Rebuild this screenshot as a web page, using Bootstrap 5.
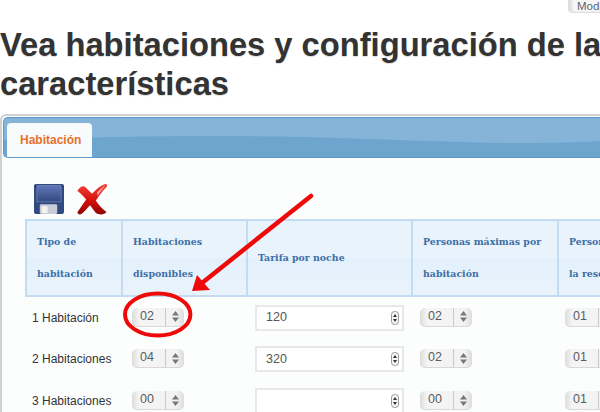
<!DOCTYPE html>
<html lang="es">
<head>
<meta charset="utf-8">
<title>Habitaciones</title>
<link href="https://cdn.jsdelivr.net/npm/bootstrap@5.3.0/dist/css/bootstrap.min.css" rel="stylesheet">
<style>
html,body{width:600px;height:412px;overflow:hidden;background:#fff}
body{font-family:"Liberation Sans",Arial,sans-serif;color:#333;position:relative}
.pagewrap{width:900px}
.topbtn{display:block;margin-left:568px;margin-top:-9px;width:120px;height:22px;padding:8px 0 0 8px;font-size:11.5px;line-height:13px;color:#5a6472;background:linear-gradient(#f2f2f2,#fafafa);border:1px solid #ddd;border-radius:4px;box-shadow:inset 3px 0 3px #ddd}
.ttl{font-family:"Liberation Sans",Arial,sans-serif;font-weight:700;font-size:32.7px;line-height:39px;color:#333;margin:12px 0 0 0;white-space:nowrap;text-shadow:0 1px 1px #ddd}
.frame{margin-top:11px;border:2px solid #d0d0d0;border-right:0;border-bottom:0;border-radius:6px 0 0 0;padding:1px 0 0 1px;background:#fcfefe;height:320px}
.tabbar{position:relative;height:41px;background:#86b4d8;border:1px solid #5c9bcf;border-right:0;border-radius:5px 0 0 5px;overflow:hidden}
.wave{position:absolute;left:0;top:0;width:900px;height:40px}
.tabitem{position:absolute;left:3px;top:5px;width:85px;height:35px;background:#f7fbfc;border-radius:4px 4px 0 0;font-size:12px;font-weight:700;color:#e8702a;padding:10px 0 0 13px;line-height:14px}
.tools{padding:26px 0 0 31px;gap:12px;height:61px}
.roomtable{table-layout:fixed;width:761px;margin-left:22px;border-collapse:collapse}
.roomtable th{height:76px;padding:0 0 0 10px;background:linear-gradient(#e8f3fc 50%,#e3f0fb 50%,#e9f3fc);border:2px solid #c4dcf1;font-family:"DejaVu Serif",serif;font-size:9.4px;font-weight:700;line-height:32px;color:#3d6ea6;vertical-align:middle}
.roomtable td{height:42px;padding:0;border:0;background:transparent;vertical-align:middle;font-size:12px;color:#333}
.roomtable td.c1{padding-left:6px;white-space:nowrap}
.roomtable td.c2{padding-left:10px}
.roomtable td.c3{padding-left:8px}
.roomtable td.c4{padding-left:8px}
.roomtable td.c5{padding-left:7px}
.w1{width:96px}.w2{width:125px}.w3{width:165px}.w4{width:146px}.w5{width:229px}
.pick{display:flex;width:52px;height:19px;margin-top:-1px;background:linear-gradient(90deg,#dcdcdc,#f5f5f5 14%,#f2f2f2 86%,#dcdcdc);border-bottom:1px solid #d8d8d8;border-radius:5px;font-size:12.5px;line-height:17px;color:#5c5c5c}
.pickval{width:34px;padding-left:8px;border-right:1px solid #c9c9c9}
.pickarr{flex:1;display:flex;align-items:center;justify-content:center}
.numbox{display:flex;align-items:center;justify-content:space-between;width:149px;height:26px;border:2px solid #e8e8e8;background:#fff;padding:0 3px 0 9px;font-size:12.5px;color:#555}
.overlay{position:absolute;left:0;top:0;width:600px;height:412px;pointer-events:none}
</style>
</head>
<body>
<div class="pagewrap">
  <span class="topbtn">Modificar</span>
  <h1 class="ttl">Vea habitaciones y configuración de la<br>características</h1>
  <div class="frame">
    <div class="tabbar">
      <svg class="wave" viewBox="0 0 900 40" preserveAspectRatio="none"><path d="M0 22C120 18 220 17 300 19S450 25 520 25 590 22 640 22 800 24 900 24V40H0Z" fill="#6ea5cf"/></svg>
      <div class="tabitem">Habitación</div>
    </div>
    <div class="tools d-flex align-items-start">
      <svg width="30" height="30" viewBox="0 0 31 31"><defs><linearGradient id="fl" x1="0" y1="0" x2="0" y2="1"><stop offset="0" stop-color="#5f78b8"/><stop offset="1" stop-color="#33497f"/></linearGradient></defs><path d="M2 0H29Q31 0 31 2V29Q31 31 29 31H2Q0 31 0 29V2Q0 0 2 0Z" fill="#2f4a80"/><rect x="3" y="1.500" width="25" height="17" fill="url(#fl)" stroke="#8293c0" stroke-width=".6"/><rect x="6" y="21" width="18" height="10" rx="1.500" fill="#c9ccd6"/><rect x="8" y="23" width="6" height="7" fill="#f3f3f3"/><circle cx="1.700" cy="2" r=".8" fill="#1f2e52"/><circle cx="29" cy="2" r=".8" fill="#1f2e52"/></svg>
      <svg width="32" height="31" viewBox="0 0 32 32"><defs><linearGradient id="xr" x1="0" y1="0" x2="0" y2="1"><stop offset="0" stop-color="#f04038"/><stop offset=".55" stop-color="#d40f0a"/><stop offset="1" stop-color="#8e0503"/></linearGradient></defs><path d="M1 7C3 3 7 1 9 3L16 10C20 6 25 1 30 0 32 0 32 2 31 3 27 7 23 12 20 17 23 22 27 26 31 29 29 32 23 32 20 30 18 27 16 25 14 22 11 25 8 29 5 31 3 32 1 31 1 29 4 25 7 20 10 16 7 12 4 10 1 7Z" fill="url(#xr)"/><path d="M21 9C24 6 27 3 30 1.500 27 5 24 9 22 12Z" fill="#f8a09a"/></svg>
    </div>
    <table class="roomtable">
      <colgroup><col class="w1"><col class="w2"><col class="w3"><col class="w4"><col class="w5"></colgroup>
      <thead><tr>
        <th>Tipo de<br>habitación</th>
        <th>Habitaciones<br>disponibles</th>
        <th>Tarifa por noche</th>
        <th>Personas máximas por<br>habitación</th>
        <th>Personas máximas en<br>la reserva</th>
      </tr></thead>
      <tbody>
        <tr>
          <td class="c1">1 Habitación</td>
          <td class="c2"><div class="pick"><span class="pickval">02</span><span class="pickarr"><svg width="7" height="11" viewBox="0 0 7 11"><path d="M3.500 0 7 4.500H0ZM3.500 11 0 6.500H7Z" fill="#777"/></svg></span></div></td>
          <td class="c3"><div class="numbox"><span>120</span><svg width="8" height="14" viewBox="0 0 8 14"><rect x=".5" y=".5" width="7" height="13" rx="3" fill="#f4f4f4" stroke="#999"/><path d="M4 3 6 6H2ZM4 11 2 8H6Z" fill="#333"/></svg></div></td>
          <td class="c4"><div class="pick"><span class="pickval">02</span><span class="pickarr"><svg width="7" height="11" viewBox="0 0 7 11"><path d="M3.500 0 7 4.500H0ZM3.500 11 0 6.500H7Z" fill="#777"/></svg></span></div></td>
          <td class="c5"><div class="pick"><span class="pickval">01</span><span class="pickarr"><svg width="7" height="11" viewBox="0 0 7 11"><path d="M3.500 0 7 4.500H0ZM3.500 11 0 6.500H7Z" fill="#777"/></svg></span></div></td>
        </tr>
        <tr>
          <td class="c1">2 Habitaciones</td>
          <td class="c2"><div class="pick"><span class="pickval">04</span><span class="pickarr"><svg width="7" height="11" viewBox="0 0 7 11"><path d="M3.500 0 7 4.500H0ZM3.500 11 0 6.500H7Z" fill="#777"/></svg></span></div></td>
          <td class="c3"><div class="numbox"><span>320</span><svg width="8" height="14" viewBox="0 0 8 14"><rect x=".5" y=".5" width="7" height="13" rx="3" fill="#f4f4f4" stroke="#999"/><path d="M4 3 6 6H2ZM4 11 2 8H6Z" fill="#333"/></svg></div></td>
          <td class="c4"><div class="pick"><span class="pickval">02</span><span class="pickarr"><svg width="7" height="11" viewBox="0 0 7 11"><path d="M3.500 0 7 4.500H0ZM3.500 11 0 6.500H7Z" fill="#777"/></svg></span></div></td>
          <td class="c5"><div class="pick"><span class="pickval">01</span><span class="pickarr"><svg width="7" height="11" viewBox="0 0 7 11"><path d="M3.500 0 7 4.500H0ZM3.500 11 0 6.500H7Z" fill="#777"/></svg></span></div></td>
        </tr>
        <tr>
          <td class="c1">3 Habitaciones</td>
          <td class="c2"><div class="pick"><span class="pickval">00</span><span class="pickarr"><svg width="7" height="11" viewBox="0 0 7 11"><path d="M3.500 0 7 4.500H0ZM3.500 11 0 6.500H7Z" fill="#777"/></svg></span></div></td>
          <td class="c3"><div class="numbox"><span></span><svg width="8" height="14" viewBox="0 0 8 14"><rect x=".5" y=".5" width="7" height="13" rx="3" fill="#f4f4f4" stroke="#999"/><path d="M4 3 6 6H2ZM4 11 2 8H6Z" fill="#333"/></svg></div></td>
          <td class="c4"><div class="pick"><span class="pickval">00</span><span class="pickarr"><svg width="7" height="11" viewBox="0 0 7 11"><path d="M3.500 0 7 4.500H0ZM3.500 11 0 6.500H7Z" fill="#777"/></svg></span></div></td>
          <td class="c5"><div class="pick"><span class="pickval">01</span><span class="pickarr"><svg width="7" height="11" viewBox="0 0 7 11"><path d="M3.500 0 7 4.500H0ZM3.500 11 0 6.500H7Z" fill="#777"/></svg></span></div></td>
        </tr>
      </tbody>
    </table>
  </div>
</div>
<svg class="overlay" viewBox="0 0 600 412">
  <path d="M311 196 202 283" stroke="#ee0a0a" stroke-width="4.500" stroke-linecap="round" fill="none"/>
  <path d="M192 291 197 275 210 290Z" fill="#ee0a0a"/>
  <ellipse cx="157.700" cy="314.500" rx="32.700" ry="21" fill="none" stroke="#ee0a0a" stroke-width="4"/>
</svg>
</body>
</html>
